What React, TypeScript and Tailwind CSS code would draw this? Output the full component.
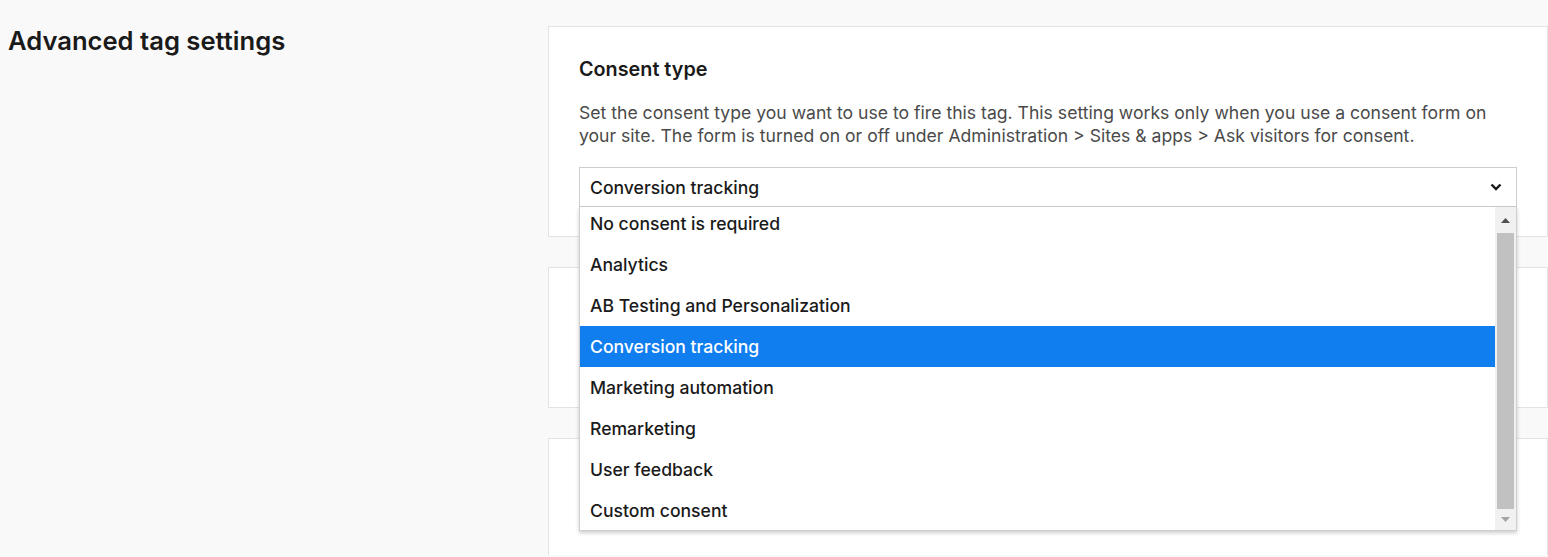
import { useState } from "react";

const OPTIONS = [
  "No consent is required",
  "Analytics",
  "AB Testing and Personalization",
  "Conversion tracking",
  "Marketing automation",
  "Remarketing",
  "User feedback",
  "Custom consent",
];

function Chevron() {
  return (
    <svg width="12" height="8" viewBox="0 0 12 8" className="text-[#1a1a1a]">
      <path d="M1.5 1.5 L6 6 L10.5 1.5" fill="none" stroke="currentColor" strokeWidth="2.4" />
    </svg>
  );
}

export default function App() {
  const [value, setValue] = useState("Conversion tracking");

  return (
    <div className="min-h-screen bg-[#f9f9f9] font-['Inter',sans-serif] text-[#1a1a1a] flex pt-[26px]">
      {/* Left column */}
      <div className="w-[548px] shrink-0 pl-[8px]">
        <h2 className="text-[25.6px] leading-[30px] font-semibold">Advanced tag settings</h2>
      </div>

      {/* Cards */}
      <div className="w-[1000px] flex flex-col gap-[30px]">
        <div className="bg-white border border-[#e3e3e3] px-[30px] pt-[30px] pb-[29px]">
          <h3 className="text-[19.8px] leading-[24px] font-semibold">Consent type</h3>
          <p className="mt-[20px] text-[17.6px] leading-[23px] text-[#4a4a4a]">
            Set the consent type you want to use to fire this tag. This setting works only when you use a consent form on
            your site. The form is turned on or off under Administration &gt; Sites &amp; apps &gt; Ask visitors for consent.
          </p>
          <div className="relative mt-[20px]">
            <div className="h-[40px] border border-[#cdcdcd] bg-white flex items-center justify-between pl-[10px] pr-[14px]">
              <span className="text-[17.6px] font-medium pt-[2px]">{value}</span>
              <Chevron />
            </div>

            {/* Open listbox */}
            <div className="absolute left-0 right-0 top-[40px] z-10 h-[324px] flex bg-white border-l border-r border-b border-[#cfcfcf] shadow-[0_2px_4px_rgba(0,0,0,0.2)]">
              <div className="flex-1 overflow-hidden">
                <ul className="-mt-[4px]">
                  {OPTIONS.map((o) => (
                    <li
                      key={o}
                      onClick={() => setValue(o)}
                      className={`h-[41px] flex items-center pl-[10px] pt-[2px] text-[17.6px] font-medium cursor-default ${
                        o === value ? "bg-[#117ef0] text-white" : "text-[#1a1a1a]"
                      }`}
                    >
                      {o}
                    </li>
                  ))}
                </ul>
              </div>
              <div className="w-[21px] bg-[#f1f1f1] flex flex-col">
                <div className="h-[26px] flex items-center justify-center">
                  <svg width="9" height="5" viewBox="0 0 9 5">
                    <path d="M0 5 L4.5 0 L9 5 Z" fill="#505050" />
                  </svg>
                </div>
                <div className="flex-1 mx-[2px] bg-[#c1c1c1]" />
                <div className="h-[21px] flex items-center justify-center">
                  <svg width="9" height="5" viewBox="0 0 9 5">
                    <path d="M0 0 L4.5 5 L9 0 Z" fill="#a3a3a3" />
                  </svg>
                </div>
              </div>
            </div>
          </div>
        </div>

        <div className="bg-white border border-[#e3e3e3] h-[141px]" />
        <div className="bg-white border border-[#e3e3e3] h-[117px] border-b-0" />
      </div>
    </div>
  );
}
